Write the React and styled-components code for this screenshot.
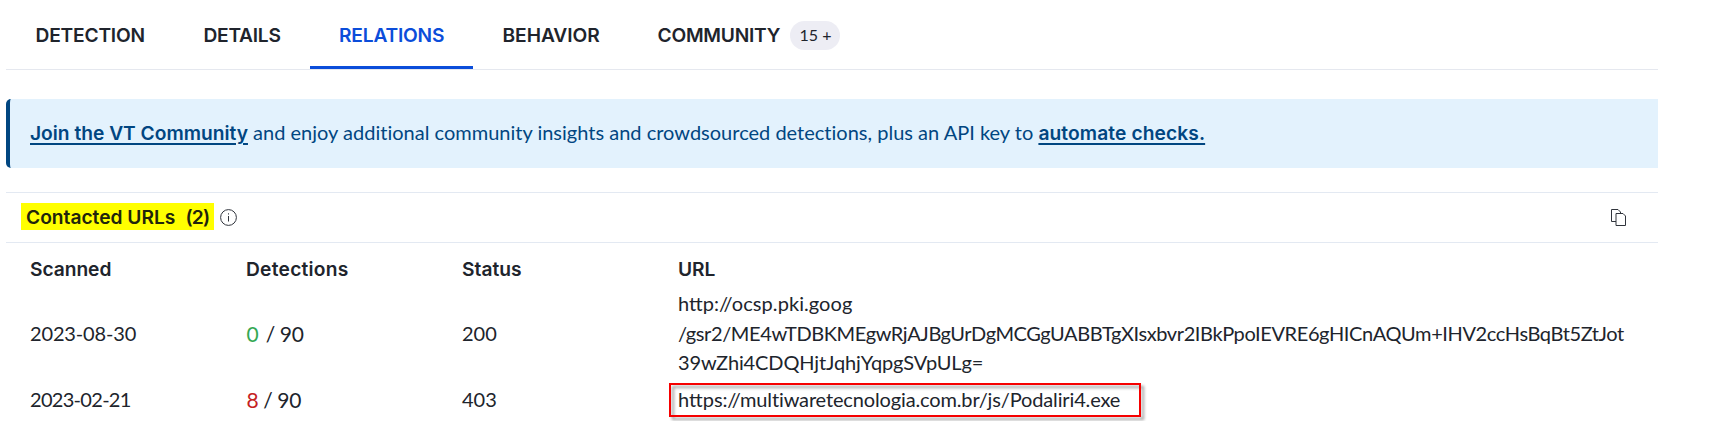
import React from 'react';
import styled, { createGlobalStyle } from 'styled-components';

const GlobalStyle = createGlobalStyle`
  body { margin: 0; background: #fff; color: #20242c; font-family: Lato, sans-serif; font-size: 20px; }
`;
const Page = styled.main`
  width: 1652px;
  margin-left: 6px;
`;
const TabBar = styled.nav`
  display: flex;
  height: 69px;
  border-bottom: 1px solid #e5e8ef;
`;
const Tab = styled.a`
  box-sizing: border-box;
  display: flex;
  align-items: center;
  height: 69px;
  width: ${(p) => p.$width}px;
  padding: 4px 0 0 ${(p) => (p.$active ? 29 : 29.5)}px;
  border-bottom: 3px solid ${(p) => (p.$active ? '#0b4dda' : 'transparent')};
  color: ${(p) => (p.$active ? '#0b4dda' : '#20242c')};
  font: 580 19.2px/24px Inter, sans-serif;
  letter-spacing: ${(p) => p.$spacing}px;
  white-space: nowrap;
`;
const Badge = styled.span`
  box-sizing: border-box;
  width: 50px;
  height: 29px;
  margin-left: 10px;
  padding-left: 1px;
  border-radius: 15px;
  background: #ededf4;
  color: #20242c;
  font: 400 16px/28px Lato, sans-serif;
  letter-spacing: 0;
  text-align: center;
`;
const Banner = styled.section`
  box-sizing: border-box;
  height: 69px;
  margin: 29px 0 24px;
  padding: 0 0 2px 20px;
  border-left: 4px solid #014681;
  border-radius: 5px 0 0 5px;
  background: #e3f2fd;
  color: #014681;
  line-height: 67px;
  white-space: pre;
  font-variant-ligatures: none;
  letter-spacing: 0.006px;
`;
const BannerLink = styled.a`
  font: 600 19.2px Inter, sans-serif;
  letter-spacing: ${(p) => p.$spacing}px;
  text-decoration: underline 2px;
  text-underline-offset: 3px;
  text-decoration-skip-ink: auto;
`;
const SectionHeader = styled.header`
  box-sizing: border-box;
  display: flex;
  align-items: center;
  height: 51px;
  padding: 0 32px 0 15px;
  border: solid #e3e9f2;
  border-width: 1px 0;
`;
const Highlight = styled.h2`
  box-sizing: border-box;
  width: 193px;
  height: 27px;
  margin: 0 6px 2px 0;
  padding-left: 5px;
  background: #ff0;
  color: #20240c;
  font: 600 19.2px/28px Inter, sans-serif;
  letter-spacing: 0;
  white-space: pre;
`;
const Count = styled.span`
  margin-left: 10px;
  letter-spacing: -0.8px;
`;
const CopyButton = styled.span`
  display: flex;
  margin-left: auto;
`;
const Row = styled.div`
  display: grid;
  grid-template-columns: 216px 216px 216px 1fr;
  align-items: center;
  padding-left: 24px;
`;
const HeaderRow = styled(Row)`
  box-sizing: border-box;
  height: 46px;
  padding-top: 6px;
  font: 600 19.2px/24px Inter, sans-serif;
`;
const HeaderCell = styled.span`
  letter-spacing: ${(p) => p.$spacing}px;
`;
const UrlRow = styled(Row)`
  height: ${(p) => p.$height}px;
`;
const Cell = styled.span`
  line-height: 29.5px;
  white-space: pre;
  letter-spacing: ${(p) => p.$spacing || 0}px;
`;
const Detections = styled(Cell)`
  padding-left: 0.5px;
  font-size: 21px;
`;
const Hits = styled.span`
  margin-right: ${(p) => (p.$bad ? 5 : 7.5)}px;
  color: ${(p) => (p.$bad ? '#c5221f' : '#34a853')};
`;
const UrlLine = styled.div`
  position: relative;
  width: max-content;
  line-height: 29.5px;
  letter-spacing: ${(p) => p.$spacing}px;
`;
const Scheme = styled.span`
  letter-spacing: 0;
`;
const Marker = styled.i`
  position: absolute;
  box-sizing: border-box;
  left: -9px;
  top: -2px;
  width: 472px;
  height: 34px;
  border: 2px solid #f60000;
  filter: drop-shadow(3px 3px 1.5px rgba(0, 0, 0, 0.4));
`;

const InfoIcon = () => (
  <svg width="17" height="17" viewBox="0 0 17 17" fill="none" stroke="#30343c">
    <circle cx="8.5" cy="8.5" r="7.9" />
    <path d="M8.5 7v5.5M8.5 4.3v1.2" />
  </svg>
);
const CopyIcon = () => (
  <svg width="15" height="17" viewBox="0 0 15 17" fill="none" stroke="#30343c">
    <path d="M5 12.5H.5V.5H7l2.500 2.500V4.500" />
    <path d="M5 4.500h7l2.500 2.500v9.500H5z" />
  </svg>
);

const tabs = [
  { label: 'DETECTION', width: 168, spacing: -0.2 },
  { label: 'DETAILS', width: 136, spacing: -0.28 },
  { label: 'RELATIONS', width: 163, spacing: -0.2, active: true },
  { label: 'BEHAVIOR', width: 155, spacing: -0.06 },
  { label: 'COMMUNITY', width: 212, spacing: -0.25, badge: '15 +' },
];
const headings = [['Scanned', -0.05], ['Detections', 0.25], ['Status', 0.03], ['URL', -0.1]];

const rows = [
  {
    date: '2023-08-30', hits: 0, status: '200', height: 89, spacing: -0.15,
    lines: [
      ['http://ocsp.pki.goog', 0.07],
      ['/gsr2/ME4wTDBKMEgwRjAJBgUrDgMCGgUABBTgXIsxbvr2IBkPpoIEVRE6gHICnAQUm+IHV2ccHsBqBt5ZtJot', -0.39],
      ['39wZhi4CDQHjtJqhjYqpgSVpULg=', -0.13],
    ],
  },
  {
    date: '2023-02-21', hits: 8, status: '403', height: 43, spacing: -0.7, marked: true,
    lines: [['https://multiwaretecnologia.com.br/js/Podaliri4.exe', -0.14]],
  },
];

const UrlText = ({ text }) => {
  const match = text.match(/^(http)(.*)$/);
  return match ? <><Scheme>{match[1]}</Scheme>{match[2]}</> : text;
};

export default function App() {
  return (
    <Page>
      <GlobalStyle />
      <TabBar>
        {tabs.map((t) => (
          <Tab key={t.label} $width={t.width} $spacing={t.spacing} $active={t.active}>
            {t.label}
            {t.badge && <Badge>{t.badge}</Badge>}
          </Tab>
        ))}
      </TabBar>
      <Banner>
        <BannerLink $spacing={0}>Join the VT Community</BannerLink>
        {' and enjoy additional community insights and crowdsourced detections, plus an API key to '}
        <BannerLink $spacing={0.1}>automate checks.</BannerLink>
      </Banner>
      <SectionHeader>
        <Highlight>Contacted URLs<Count>(2)</Count></Highlight>
        <InfoIcon />
        <CopyButton><CopyIcon /></CopyButton>
      </SectionHeader>
      <HeaderRow>
        {headings.map(([h, s]) => <HeaderCell key={h} $spacing={s}>{h}</HeaderCell>)}
      </HeaderRow>
      {rows.map((r) => (
        <UrlRow key={r.date} $height={r.height}>
          <Cell $spacing={r.spacing}>{r.date}</Cell>
          <Detections $spacing={-0.4}><Hits $bad={r.hits > 0}>{r.hits}</Hits>/ 90</Detections>
          <Cell>{r.status}</Cell>
          <div>
            {r.lines.map(([text, s]) => (
              <UrlLine key={text} $spacing={s}><UrlText text={text} />{r.marked && <Marker />}</UrlLine>
            ))}
          </div>
        </UrlRow>
      ))}
    </Page>
  );
}
